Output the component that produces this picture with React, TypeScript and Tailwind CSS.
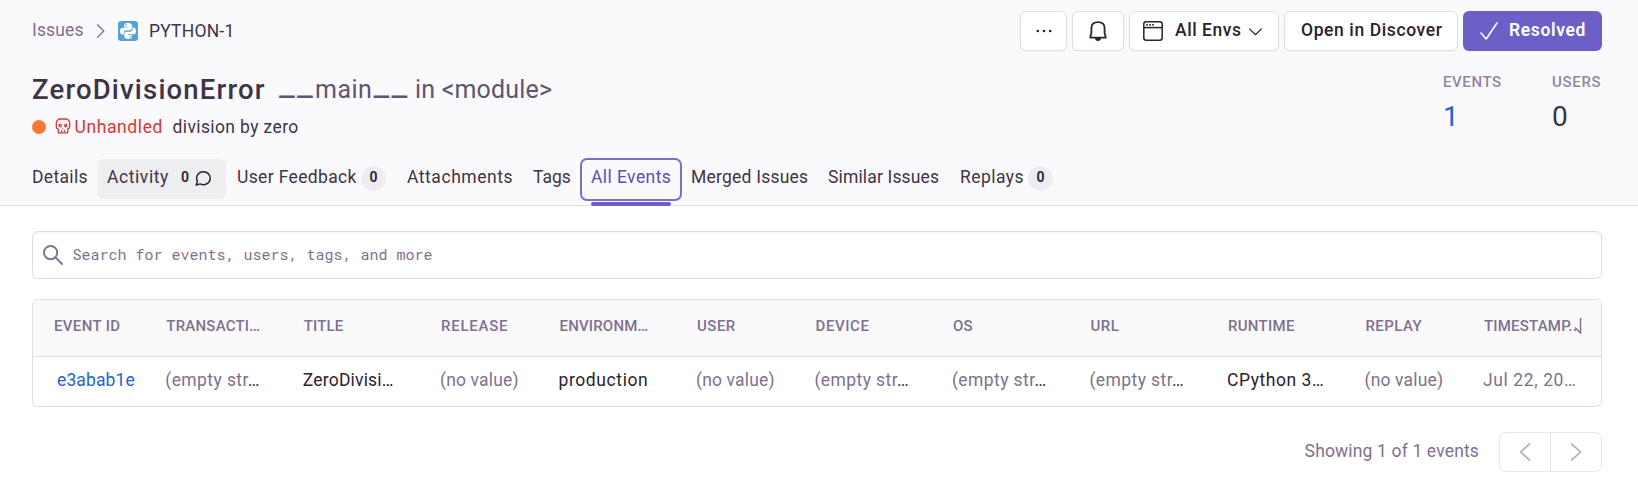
import React from "react";

function Chevron({ className, d }: { className: string; d: string }) {
  return (
    <svg viewBox="0 0 20 20" className={className} fill="none" stroke="currentColor" strokeWidth="1.8" strokeLinecap="round" strokeLinejoin="round">
      <path d={d} />
    </svg>
  );
}

function PythonLogo() {
  return (
    <svg viewBox="0 0 20 20" className="ml-[10px] size-5 shrink-0">
      <rect width="20" height="20" rx="3" fill="#5a9fd6" />
      <path
        fill="#fff"
        d="M9.8 2.1c-2.6 0-3.7.9-3.7 2.4v1.7h4v.6H4.6C2.9 6.8 2 8.2 2 10.2s.9 3.3 2.5 3.3h1.3v-1.7c0-1.5 1.2-2.6 2.7-2.6h3.3c1.4 0 2.2-1 2.2-2.2V4.5c0-1.5-1.4-2.4-4.2-2.4ZM7.9 3.3a.8.8 0 1 1 0 1.6.8.8 0 0 1 0-1.6Z"
      />
      <path
        fill="#fff"
        d="M10.2 18c2.6 0 3.7-.9 3.7-2.4v-1.7h-4v-.6h5.5c1.7 0 2.6-1.4 2.6-3.4s-.9-3.3-2.5-3.3h-.9v1.7c0 1.5-1.2 2.4-2.7 2.4H8.5c-1.4 0-2.2 1-2.2 2.2v2.7c0 1.5 1.2 2.4 3.9 2.4Zm1.9-1.2a.8.8 0 1 1 0-1.6.8.8 0 0 1 0 1.6Z"
      />
    </svg>
  );
}

function Skull() {
  return (
    <svg viewBox="0 0 16 16" className="-mt-[2px] ml-[9px] size-4 shrink-0 text-[#df3338]" fill="none" stroke="currentColor" strokeWidth="1.3" strokeLinejoin="round">
      <path d="M5.7 1h4.6C13 1 14.7 2.9 14.7 5.3v3.4c0 1.500-.8 2.300-2 2.500v3.600H3.300v-3.600c-1.200-.2-2-1-2-2.500V5.300C1.300 2.900 3 1 5.700 1Z" />
      <circle cx="5.2" cy="7.6" r="1.2" />
      <circle cx="10.8" cy="7.6" r="1.2" />
      <path strokeWidth="1.1" d="M6.6 12v2.6M9.4 12v2.6M8 9.8v1" />
    </svg>
  );
}

const button = "flex h-10 shrink-0 items-center rounded-[6px] border border-[#e0dce5] bg-white text-[17.5px] font-medium text-[#2b2233] shadow-[0_1px_1px_rgba(43,34,51,0.04)]";

function Badge() {
  return (
    <span className="mt-[3px] flex h-[25px] w-[25px] items-center justify-center rounded-full bg-[#efebf3] pb-[2px] text-[14px] font-semibold text-[#2b2233]">0</span>
  );
}

const muted = "text-[#80708f] tracking-[0.4px]";
const noValue = "text-[#80708f] tracking-[0.16px]";

const columns = [
  { head: "EVENT ID", headCls: "tracking-[0.35px]", value: "e3abab1e", cls: "pl-1 text-[#2562d4] tracking-[0.12px]" },
  { head: "TRANSACTI…", headCls: "tracking-[0.22px]", value: "(empty str", dots: true, cls: muted },
  { head: "TITLE", headCls: "tracking-[0.15px]", value: "ZeroDivisi…", cls: "text-[#2b2233] tracking-[0.19px]" },
  { head: "RELEASE", headCls: "tracking-[0.75px]", value: "(no value)", cls: noValue },
  { head: "ENVIRONM…", headCls: "tracking-[0.18px]", value: "production", cls: "text-[#2b2233] tracking-[0.6px]" },
  { head: "USER", headCls: "tracking-[0.5px]", value: "(no value)", cls: noValue },
  { head: "DEVICE", headCls: "tracking-[0.6px]", value: "(empty str", dots: true, cls: muted },
  { head: "OS", headCls: "tracking-[0.3px]", value: "(empty str", dots: true, cls: muted },
  { head: "URL", headCls: "tracking-[0.5px]", value: "(empty str", dots: true, cls: muted },
  { head: "RUNTIME", headCls: "tracking-[0.3px]", value: "CPython 3…", cls: "text-[#2b2233] tracking-[0.55px]" },
  { head: "REPLAY", headCls: "tracking-[0.43px]", value: "(no value)", cls: noValue },
  { head: "TIMESTAMP..", headCls: "tracking-[0.2px]", value: "Jul 22, 20…", cls: "text-[#80708f] tracking-[0.6px]", sorted: true },
];

const grid = "grid grid-cols-[112.3px_137.5px_137.2px_118.5px_137.5px_118.5px_137.5px_137.5px_137.5px_137.5px_118.5px_1fr]";
const tab = "flex h-10 shrink-0 items-center pb-[5px] pl-2.5";

export default function App() {
  return (
    <div className="h-[492px] w-[1638px] overflow-hidden bg-white font-['Roboto',sans-serif] text-[17.5px] leading-5 whitespace-nowrap text-[#3e3446]">
      <header className="h-[206px] border-b border-[#e0dce5] bg-[#fafafc] px-8 pt-[11px] pr-9">
        <div className="flex h-10 items-center justify-between">
          <nav className="flex items-center">
            <span className="w-[62px] pb-[2px] tracking-[0.15px] text-[#80708f]">Issues</span>
            <Chevron className="size-[14px] text-[#80708f]" d="M5 1l9 9-9 9" />
            <PythonLogo />
            <span className="ml-[11px] tracking-[0.2px]">PYTHON-1</span>
          </nav>
          <div className="flex gap-[5px]">
            <div className={`${button} w-[47px] justify-center`}>
              <svg viewBox="0 0 16 4" className="h-1 w-4" fill="currentColor">
                <circle cx="1.8" cy="2" r="1.3" />
                <circle cx="8" cy="2" r="1.3" />
                <circle cx="14.2" cy="2" r="1.3" />
              </svg>
            </div>
            <div className={`${button} w-[52px] justify-center`}>
              <svg viewBox="0 0 18 20" className="h-5 w-[18px]" fill="none" stroke="currentColor" strokeWidth="1.8" strokeLinejoin="round">
                <path d="M1.2 16.6 2.4 12V7.2C2.4 3.5 5 1.2 9 1.2s6.6 2.3 6.6 6V12l1.2 4.6Z" />
                <path fill="currentColor" stroke="none" d="M6 17h6c0 1.8-1.2 3-3 3s-3-1.2-3-3Z" />
              </svg>
            </div>
            <div className={`${button} w-[150px] pl-[13px]`}>
              <svg viewBox="0 0 20 20" className="size-5" fill="none" stroke="currentColor" strokeWidth="1.5">
                <rect x="0.8" y="0.8" width="18.4" height="18.4" rx="2.5" />
                <path d="M1 6.6h18" />
                <path strokeWidth="1.7" d="M3.2 3.9h1.6M6.2 3.9h1.6M9.2 3.9h1.6" />
              </svg>
              <span className="ml-3 w-[74px] pb-[2px] tracking-[0.55px]">All Envs</span>
              <Chevron className="size-[13px]" d="M1 6l9 9 9-9" />
            </div>
            <div className={`${button} w-[174px] pb-[2px] pl-4 tracking-[0.6px]`}>Open in Discover</div>
            <div className="flex h-10 w-[139px] items-center rounded-[6px] bg-[#6c5fc7] pl-[17px] text-white">
              <svg viewBox="0 0 18 18" className="h-[18px] w-[18px]" fill="none" stroke="currentColor" strokeWidth="1.6" strokeLinecap="round" strokeLinejoin="round">
                <path d="M1 11 6.2 17 17 1" />
              </svg>
              <span className="ml-[11px] pb-[2px] font-semibold tracking-[0.65px]">Resolved</span>
            </div>
          </div>
        </div>

        <div className="mt-6 flex h-[62px] justify-between">
          <div>
            <h1 className="flex h-[30px] items-center text-[25px] leading-[30px] text-[#625471]">
              <span className="w-[247px] text-[27.5px] font-medium tracking-[1.18px] text-[#3e3446]">ZeroDivisionError</span>
              <span className="w-[136px] pb-[9px] leading-[30px]">
                <span className="align-[3px] text-[35px] leading-none tracking-[2.2px]">__</span>
                <span className="tracking-[0.5px]">main</span>
                <span className="ml-px align-[3px] text-[35px] leading-none tracking-[2.2px]">__</span>
              </span>
              <span className="tracking-[0.18px]">in &lt;module&gt;</span>
            </h1>
            <div className="mt-3 flex h-5 items-center">
              <span className="size-[13.5px] rounded-full bg-[#ff7738]" />
              <Skull />
              <span className="ml-[4px] w-[98px] tracking-[0.6px] text-[#df3338]">Unhandled</span>
              <span className="tracking-[0.38px]">division by zero</span>
            </div>
          </div>
          <div className="flex">
            <div className="w-[109px]">
              <div className="text-[15px] leading-[15px] font-medium tracking-[0.6px] text-[#9386a0]">EVENTS</div>
              <div className="mt-3 text-[28px] leading-[30px] text-[#2562d4]">1</div>
            </div>
            <div className="w-[50px]">
              <div className="text-[15px] leading-[15px] font-medium tracking-[0.7px] text-[#9386a0]">USERS</div>
              <div className="mt-3 text-[28px] leading-[30px]">0</div>
            </div>
          </div>
        </div>

        <div className="mt-[22px] -ml-2.5 flex">
          <div className={`${tab} w-[75px] tracking-[0.33px]`}>Details</div>
          <div className={`${tab} mr-px w-[129px] rounded-[6px] bg-[#eeeef0]`}>
            <span className="w-[74px] tracking-[0.57px]">Activity</span>
            <span className="w-[14px] text-[14px] font-semibold text-[#2b2233]">0</span>
            <svg viewBox="0 0 16 16" className="mt-[3px] size-4" fill="none" stroke="#2b2233" strokeWidth="1.5" strokeLinejoin="round">
              <path d="M1.2 15 2.4 11.2A6.8 6.5 0 1 1 5.2 13.900L1.200 15Z" />
            </svg>
          </div>
          <div className={`${tab} w-[170px]`}>
            <span className="w-[124px] tracking-[0.35px]">User Feedback</span>
            <Badge />
          </div>
          <div className={`${tab} w-[126px] tracking-[0.55px]`}>Attachments</div>
          <div className={`${tab} w-[57px]`}>Tags</div>
          <div className="relative -mt-px flex h-[43px] w-[102px] items-center rounded-[7px] border-[2.5px] border-[#7a6ecd] pb-[6px] pl-[9px] tracking-[0.42px] text-[#5b4cc0]">
            All Events
            <span className="absolute -bottom-[7px] left-[9px] h-1 w-20 rounded-sm bg-[#6c5fc7]" />
          </div>
          <div className={`${tab} -ml-px w-[137px] tracking-[0.22px]`}>Merged Issues</div>
          <div className={`${tab} w-[132px] tracking-[0.15px]`}>Similar Issues</div>
          <div className={tab}>
            <span className="w-[68px] tracking-[0.45px]">Replays</span>
            <Badge />
          </div>
        </div>
      </header>

      <main className="pt-[25px] pr-9 pl-8">
        <div className="flex h-12 items-center rounded-[6px] border border-[#e0dce5] pl-[10px] shadow-[inset_0_2px_1px_rgba(43,34,51,0.03)]">
          <svg viewBox="0 0 20 20" className="size-5 text-[#80708f]" fill="none" stroke="currentColor" strokeWidth="1.9" strokeLinecap="round">
            <circle cx="7.6" cy="7.6" r="6.6" />
            <path d="m12.4 12.4 6.6 6.6" />
          </svg>
          <span className="ml-[9.5px] pb-[2px] font-['Roboto_Mono','Liberation_Mono',monospace] text-[15px] text-[#80708f]">Search for events, users, tags, and more</span>
        </div>

        <div className="mt-5 overflow-hidden rounded-[6px] border border-[#e0dce5]">
          <div className={`${grid} h-[57px] border-b border-[#e0dce5] bg-[#fafafc] text-[15px] font-medium text-[#80708f]`}>
            {columns.map((c) => (
              <div key={c.head} className="flex items-center pb-[5px] pl-[21px]">
                <span className={c.headCls}>{c.head}</span>
                {c.sorted && (
                  <svg viewBox="0 0 8 16" className="-ml-[3px] h-4 w-2" fill="none" stroke="currentColor" strokeWidth="1.5">
                    <path d="M6.5 0v15L1 9.5" />
                  </svg>
                )}
              </div>
            ))}
          </div>
          <div className={`${grid} h-[49px]`}>
            {columns.map((c) => (
              <div key={c.head} className="flex items-center pb-[3px] pl-[20px]">
                <span className={c.cls}>
                  {c.value}
                  {c.dots && <span className="text-[#3e3446]">…</span>}
                </span>
              </div>
            ))}
          </div>
        </div>

        <div className="mt-[25px] flex h-10 items-center justify-end">
          <span className="mr-5 pb-[2px] tracking-[0.15px] text-[#80708f]">Showing 1 of 1 events</span>
          <div className="flex h-10 w-[103px] rounded-[6px] border border-[#e9e6ed] text-[#b3a9bd]">
            <div className="flex w-[51px] items-center justify-center border-r border-[#e9e6ed]">
              <Chevron className="size-[18px]" d="M15 1 5 10l10 9" />
            </div>
            <div className="flex flex-1 items-center justify-center">
              <Chevron className="size-[18px]" d="M5 1l10 9-10 9" />
            </div>
          </div>
        </div>
      </main>
    </div>
  );
}
